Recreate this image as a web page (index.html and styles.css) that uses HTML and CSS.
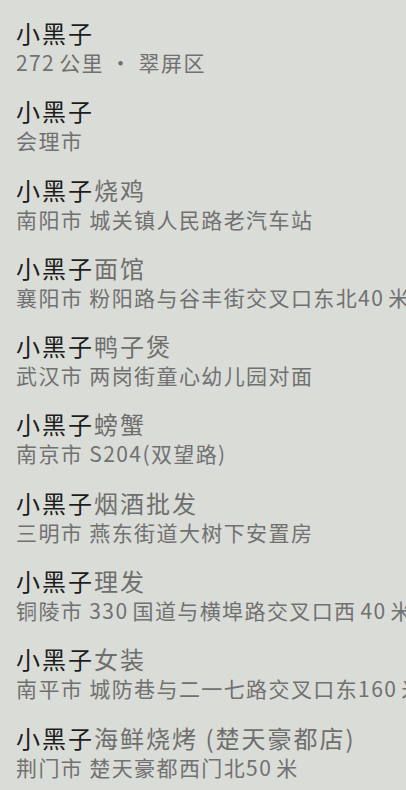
FILE: index.html
```html
<!DOCTYPE html>
<html lang="zh-CN">
<head>
  <meta charset="UTF-8" />
  <meta name="viewport" content="width=device-width, initial-scale=1.0"/>
  <title>搜索结果</title>
  <link rel="stylesheet" href="styles.css">
</head>
<body>
  <ul class="results">
    <li class="result">
      <div class="name"><b>小黑子</b></div>
      <div class="addr"><span class="num">272</span>公里 · 翠屏区</div>
    </li>
    <li class="result">
      <div class="name"><b>小黑子</b></div>
      <div class="addr">会理市</div>
    </li>
    <li class="result">
      <div class="name"><b>小黑子</b>烧鸡</div>
      <div class="addr">南阳市 城关镇人民路老汽车站</div>
    </li>
    <li class="result">
      <div class="name"><b>小黑子</b>面馆</div>
      <div class="addr">襄阳市 粉阳路与谷丰街交叉口东北<span class="num">40</span>米</div>
    </li>
    <li class="result">
      <div class="name"><b>小黑子</b>鸭子煲</div>
      <div class="addr">武汉市 两岗街童心幼儿园对面</div>
    </li>
    <li class="result">
      <div class="name"><b>小黑子</b>螃蟹</div>
      <div class="addr">南京市 S204(双望路)</div>
    </li>
    <li class="result">
      <div class="name"><b>小黑子</b>烟酒批发</div>
      <div class="addr">三明市 燕东街道大树下安置房</div>
    </li>
    <li class="result">
      <div class="name"><b>小黑子</b>理发</div>
      <div class="addr">铜陵市 <span class="num">330</span>国道与横埠路交叉口西<span class="num">40</span>米</div>
    </li>
    <li class="result">
      <div class="name"><b>小黑子</b>女装</div>
      <div class="addr">南平市 城防巷与二一七路交叉口东<span class="num">160</span>米</div>
    </li>
    <li class="result">
      <div class="name"><b>小黑子</b>海鲜烧烤 (楚天豪都店)</div>
      <div class="addr">荆门市 楚天豪都西门北<span class="num">50</span>米</div>
    </li>
  </ul>
</body>
</html>
```

FILE: styles.css
```css
body {
  margin: 0;
  background: #dadcd8;
  font-family: "Noto Sans CJK SC", "Noto Sans", sans-serif;
  overflow: hidden;
}

.results {
  list-style: none;
  margin: 0;
  padding: 0 0 0 16px;
}

.result {
  padding-top: 20.3px;
  white-space: nowrap;
}

.result:first-child {
  padding-top: 18px;
}

.name {
  font-size: 24px;
  line-height: 30px;
  letter-spacing: 2px;
  color: #6e6f6d;
}

.name b {
  font-weight: 400;
  color: #1d1d1d;
}

.addr {
  font-size: 21px;
  line-height: 28px;
  letter-spacing: 1.4px;
  color: #707170;
}

/* CJK / latin spacing */
.num {
  margin: 0 4px;
}

.num:first-child {
  margin-left: 0;
}
```
